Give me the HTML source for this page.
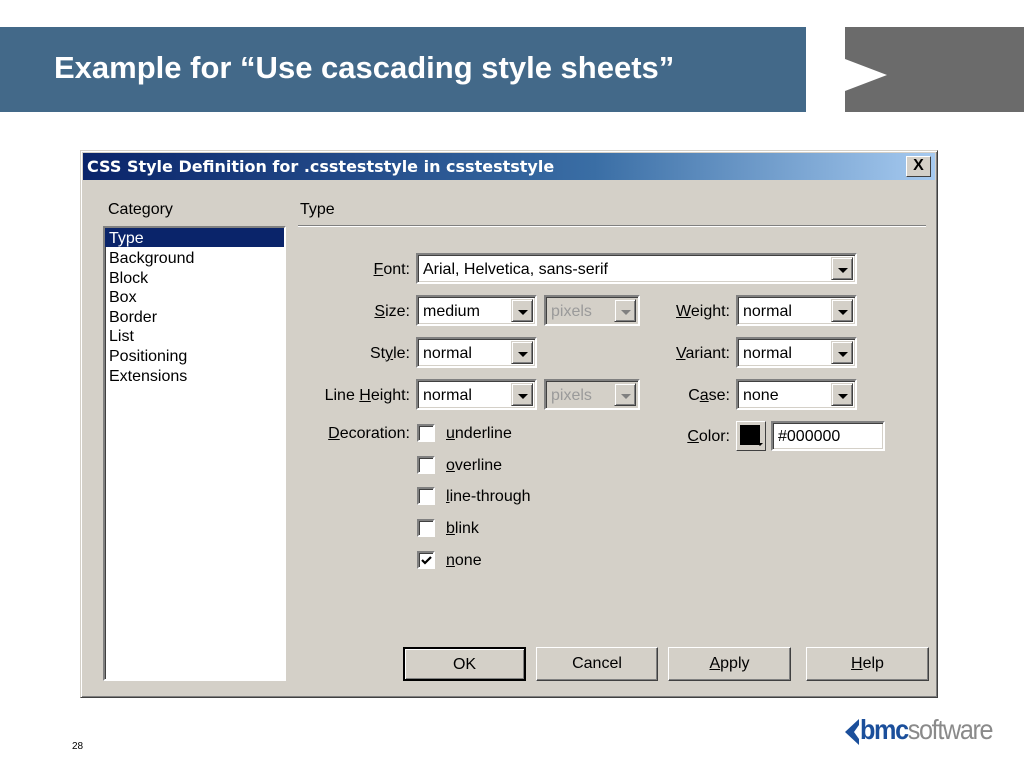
<!DOCTYPE html>
<html><head><meta charset="utf-8"><style>
*{margin:0;padding:0;box-sizing:border-box}
body{width:1024px;height:768px;background:#fff;position:relative;overflow:hidden;font-family:"Liberation Sans","DejaVu Sans",sans-serif}
.a{position:absolute}
.hdr{left:0;top:27px;width:806px;height:85px;background:#436989}
.ttl{left:54px;top:50px;color:#fff;font-weight:bold;font-size:31px;white-space:nowrap}
.gray{left:845px;top:27px;width:179px;height:85px;background:#6b6b6b}
.dlg{left:80px;top:150px;width:858px;height:548px;background:#d4d0c8;border:1px solid;border-color:#d4d0c8 #404040 #404040 #d4d0c8;box-shadow:inset 1px 1px 0 #fff,inset -1px -1px 0 #808080}
.tb{left:83px;top:153px;width:852px;height:27px;background:linear-gradient(90deg,#0a246a 0%,#3a6ea5 60%,#a6caf0 100%)}
.tbt{left:87px;top:157px;color:#fff;font-weight:bold;font-size:16px;font-family:"DejaVu Sans",sans-serif;white-space:nowrap}
.xb{left:906px;top:156px;width:25px;height:21px;background:#d4d0c8;border:1px solid;border-color:#fff #404040 #404040 #fff;font-size:16px;text-align:center;line-height:18px;font-weight:bold}
.t{font-size:16px;color:#000;white-space:nowrap}
.list{left:103px;top:226px;width:183px;height:455px;background:#fff;border:2px solid;border-color:#808080 #fff #fff #808080;box-shadow:inset 1px 1px 0 #404040}
.sel{left:105px;top:228px;width:179px;height:19px;background:#0a246a}
.sunk{background:#fff;border:2px solid;border-color:#808080 #fff #fff #808080;box-shadow:inset 1px 1px 0 #404040,inset -1px -1px 0 #d4d0c8}
.dis{background:#d4d0c8}
.dd{position:absolute;right:2px;top:2px;bottom:2px;width:22px;background:#d4d0c8;border:1px solid;border-color:#d4d0c8 #404040 #404040 #d4d0c8;box-shadow:inset 1px 1px 0 #fff,inset -1px -1px 0 #808080}
.dd:after{content:"";position:absolute;left:6px;top:10px;border-left:5px solid transparent;border-right:5px solid transparent;border-top:5px solid #000}
.dis .dd:after{border-top-color:#808080}
.v{position:absolute;left:5px;top:6px;font-size:16px}
.cb{width:18px;height:18px;background:#fff;border:2px solid;border-color:#808080 #fff #fff #808080;box-shadow:inset 1px 1px 0 #404040}
.btn{height:34px;background:#d4d0c8;border:1px solid;border-color:#fff #404040 #404040 #fff;box-shadow:inset -1px -1px 0 #808080;text-align:center;line-height:31px;font-size:16px}
u{text-decoration:underline}
.r{text-align:right}
</style></head><body>
<div class="a hdr"></div>
<div class="a ttl">Example for “Use cascading style sheets”</div>
<div class="a gray"></div>
<svg class="a" style="left:845px;top:27px" width="60" height="85"><polygon points="0,32 42,48 0,64" fill="#fff"/></svg>

<div class="a dlg"></div>
<div class="a tb"></div>
<div class="a tbt">CSS Style Definition for .cssteststyle in cssteststyle</div>
<div class="a xb">X</div>

<div class="a t" style="left:108px;top:201px">Category</div>
<div class="a t" style="left:300px;top:201px">Type</div>
<div class="a" style="left:298px;top:225px;width:628px;height:2px;border-top:1px solid #808080;border-bottom:1px solid #fff"></div>

<div class="a list"></div>
<div class="a sel"></div>
<div class="a t" style="left:109px;top:230px;color:#fff">Type</div>
<div class="a t" style="left:109px;top:249px;line-height:19.6px">Background<br>Block<br>Box<br>Border<br>List<br>Positioning<br>Extensions</div>

<div class="a t r" style="left:300px;width:110px;top:261px"><u>F</u>ont:</div>
<div class="a sunk" style="left:416px;top:253px;width:441px;height:31px"><span class="v">Arial, Helvetica, sans-serif</span><div class="dd"></div></div>

<div class="a t r" style="left:300px;width:110px;top:303px"><u>S</u>ize:</div>
<div class="a sunk" style="left:416px;top:295px;width:121px;height:31px"><span class="v">medium</span><div class="dd"></div></div>
<div class="a sunk dis" style="left:544px;top:295px;width:96px;height:31px"><span class="v" style="color:#9a9a9a">pixels</span><div class="dd"></div></div>
<div class="a t r" style="left:620px;width:110px;top:303px"><u>W</u>eight:</div>
<div class="a sunk" style="left:736px;top:295px;width:121px;height:31px"><span class="v">normal</span><div class="dd"></div></div>

<div class="a t r" style="left:300px;width:110px;top:345px">St<u>y</u>le:</div>
<div class="a sunk" style="left:416px;top:337px;width:121px;height:31px"><span class="v">normal</span><div class="dd"></div></div>
<div class="a t r" style="left:620px;width:110px;top:345px"><u>V</u>ariant:</div>
<div class="a sunk" style="left:736px;top:337px;width:121px;height:31px"><span class="v">normal</span><div class="dd"></div></div>

<div class="a t r" style="left:290px;width:120px;top:387px">Line <u>H</u>eight:</div>
<div class="a sunk" style="left:416px;top:379px;width:121px;height:31px"><span class="v">normal</span><div class="dd"></div></div>
<div class="a sunk dis" style="left:544px;top:379px;width:96px;height:31px"><span class="v" style="color:#9a9a9a">pixels</span><div class="dd"></div></div>
<div class="a t r" style="left:620px;width:110px;top:387px">C<u>a</u>se:</div>
<div class="a sunk" style="left:736px;top:379px;width:121px;height:31px"><span class="v">none</span><div class="dd"></div></div>

<div class="a t r" style="left:290px;width:120px;top:425px"><u>D</u>ecoration:</div>
<div class="a cb" style="left:417px;top:424px"></div><div class="a t" style="left:446px;top:425px"><u>u</u>nderline</div>
<div class="a cb" style="left:417px;top:456px"></div><div class="a t" style="left:446px;top:457px"><u>o</u>verline</div>
<div class="a cb" style="left:417px;top:487px"></div><div class="a t" style="left:446px;top:488px"><u>l</u>ine-through</div>
<div class="a cb" style="left:417px;top:519px"></div><div class="a t" style="left:446px;top:520px"><u>b</u>link</div>
<div class="a cb" style="left:417px;top:551px"><svg width="14" height="14" style="position:absolute;left:1px;top:1px"><path d="M2,6 L5,9 L11,3" stroke="#000" stroke-width="2.2" fill="none"/></svg></div><div class="a t" style="left:446px;top:552px"><u>n</u>one</div>

<div class="a t r" style="left:620px;width:110px;top:428px"><u>C</u>olor:</div>
<div class="a" style="left:736px;top:421px;width:30px;height:30px;background:#d4d0c8;border:1px solid;border-color:#fff #404040 #404040 #fff"><div style="position:absolute;left:3px;top:3px;width:20px;height:20px;background:#000"></div><div style="position:absolute;left:20px;top:21px;border-left:3px solid transparent;border-right:3px solid transparent;border-top:3px solid #000"></div></div>
<div class="a sunk" style="left:771px;top:421px;width:114px;height:30px"><span class="v" style="top:5px">#000000</span></div>

<div class="a btn" style="left:403px;top:647px;width:123px;border:2px solid #000;box-shadow:inset 1px 1px 0 #fff,inset -1px -1px 0 #808080">OK</div>
<div class="a btn" style="left:536px;top:647px;width:122px">Cancel</div>
<div class="a btn" style="left:668px;top:647px;width:123px"><u>A</u>pply</div>
<div class="a btn" style="left:806px;top:647px;width:123px"><u>H</u>elp</div>

<div class="a" style="left:72px;top:741px;font-size:10px">28</div>
<svg class="a" style="left:845px;top:715px" width="160" height="36"><polygon points="0,17 14,4 14,10 9,17 14,24 14,30" fill="#1b4f9b"/></svg>
<div class="a" style="left:860px;top:714px;font-size:28px;letter-spacing:-1.5px;white-space:nowrap;transform:scaleX(.9);transform-origin:left"><b style="color:#1b4f9b">bmc</b><span style="color:#8a8a8a">software</span></div>
</body></html>
